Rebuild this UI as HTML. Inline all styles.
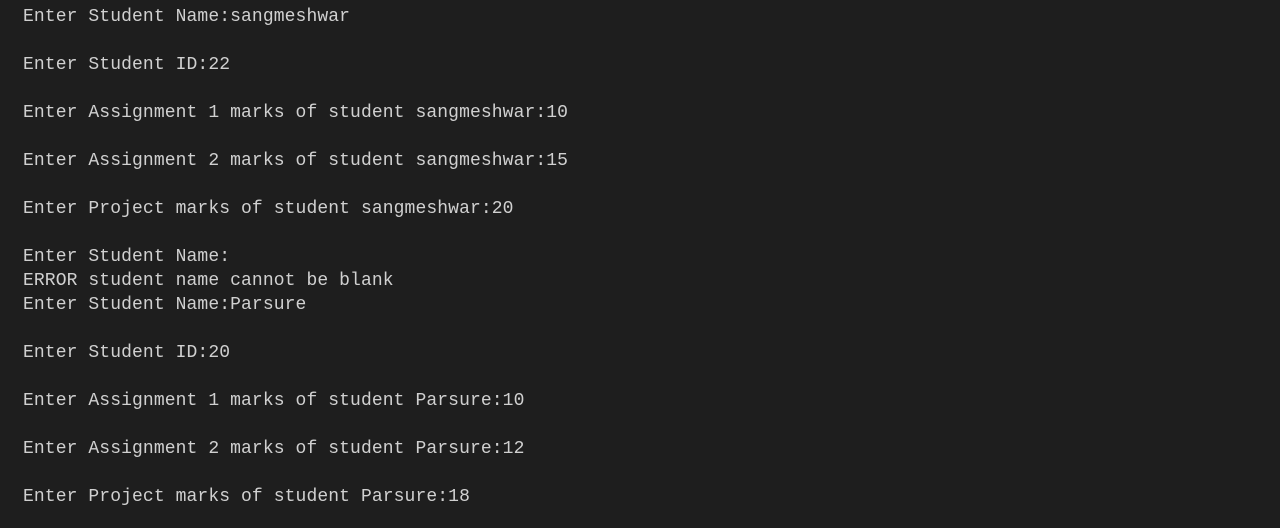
<!DOCTYPE html>
<html><head><style>
html,body{margin:0;padding:0;background:#1e1e1e;width:1280px;height:528px;overflow:hidden}
pre{margin:0;position:absolute;left:23px;top:5px;font-family:"Liberation Mono",monospace;font-size:18px;line-height:24px;color:#d0d0d0;letter-spacing:0.1px}
</style></head><body>
<pre>Enter Student Name:sangmeshwar

Enter Student ID:22

Enter Assignment 1 marks of student sangmeshwar:10

Enter Assignment 2 marks of student sangmeshwar:15

Enter Project marks of student sangmeshwar:20

Enter Student Name:
ERROR student name cannot be blank
Enter Student Name:Parsure

Enter Student ID:20

Enter Assignment 1 marks of student Parsure:10

Enter Assignment 2 marks of student Parsure:12

Enter Project marks of student Parsure:18</pre>
</body></html>
